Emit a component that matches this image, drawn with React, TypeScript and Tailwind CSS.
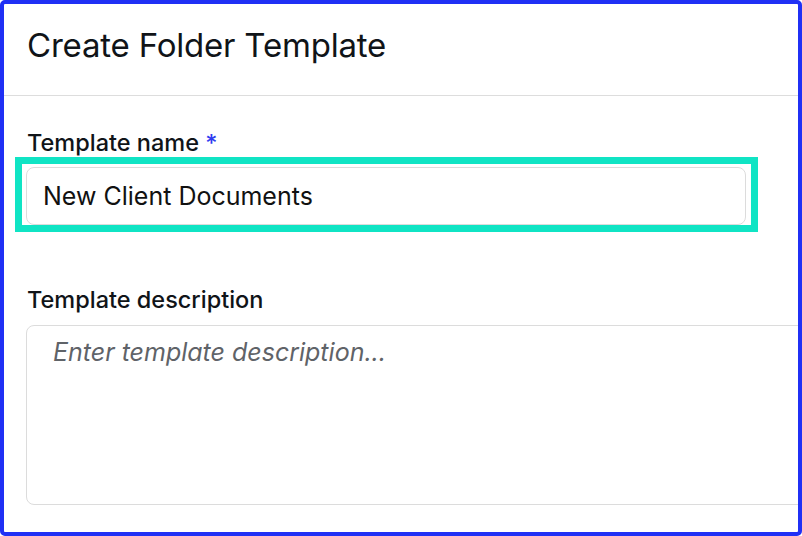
import React from "react";

export default function App() {
  return (
    <div className="w-[802px] h-[536px] bg-white border-4 border-[#2030f5] rounded-[5px] overflow-hidden relative font-['Inter',sans-serif] text-[#101418]">
      <div className="h-[92px] border-b border-[#dddddd] flex items-center pl-[23px] pb-[10px]">
        <h1 className="text-[33px] leading-[40px] font-normal tracking-[-0.2px]">Create Folder Template</h1>
      </div>
      <div className="pl-[22px] pt-[32px]">
        <label className="block pl-[1px] text-[23.5px] leading-[30px] font-medium">
          Template name <span className="text-[#2f3cf0]">*</span>
        </label>
        <div className="relative mt-[9px] w-[720px]">
          <div className="h-[58px] rounded-[8px] border border-[#dcdcdc] flex items-center pl-[16px] pt-[2px] text-[25px] text-[#111]">
            New Client Documents
          </div>
          <div className="absolute left-[-11px] top-[-10px] w-[743px] h-[75px] border-[7px] border-[#10e4c4]" />
        </div>
        <label className="block mt-[60px] pl-[1px] text-[23.5px] leading-[30px] font-medium">Template description</label>
        <div className="mt-[10px] w-[820px] h-[180px] rounded-[8px] border border-[#dcdcdc] pl-[26px] pt-[11px] text-[25px] leading-[30px] italic text-[#5f6368]">
          Enter template description...
        </div>
      </div>
    </div>
  );
}
